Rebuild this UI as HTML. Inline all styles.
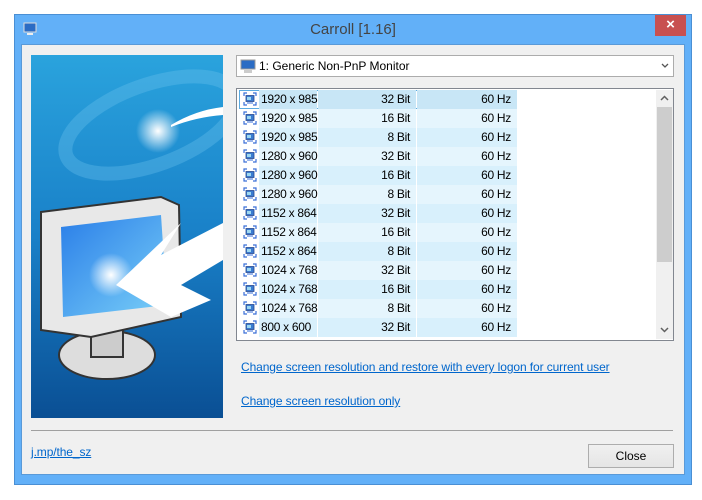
<!DOCTYPE html>
<html><head><meta charset="utf-8"><style>
*{margin:0;padding:0;box-sizing:border-box}
body{width:702px;height:500px;background:#fff;position:relative;overflow:hidden;font-family:"Liberation Sans",Arial,sans-serif;font-size:12px;color:#000}
.win{position:absolute;left:14px;top:14px;width:678px;height:471px;background:#62b0f8;border:1px solid #4a8fd4}
.title{position:absolute;left:0;right:0;top:6px;text-align:center;font-size:15px;color:#444}
.x{position:absolute;left:640px;top:0;width:31px;height:21px;background:#c85050;color:#fff;text-align:center;font-size:15px;line-height:20px;font-weight:bold}
.client{position:absolute;left:6px;top:29px;width:664px;height:431px;background:#f0f0f0;border:1px solid #5a9ad8}
.a{position:absolute}
.combo{left:236px;top:55px;width:438px;height:22px;background:#fff;border:1px solid #acacac}
.list{left:236px;top:88px;width:438px;height:253px;background:#fff;border:1px solid #828790}
.row{position:absolute;left:2px;height:19px;width:278px;font-size:12px;white-space:nowrap;letter-spacing:-0.3px}
.row span{position:absolute;top:0;height:19px;line-height:19px;white-space:nowrap;overflow:visible}
.c1{left:20px;width:58px;padding-left:2px}
.c2{left:79px;width:98px;text-align:right;padding-right:6px}
.c3{left:178px;width:100px;text-align:right;padding-right:6px}
.ic{position:absolute;left:4px;top:2px;width:14px;height:14px}
a{color:#0066cc;text-decoration:underline;letter-spacing:-0.1px}
.btn{left:588px;top:444px;width:86px;height:24px;border:1px solid #adadad;background:linear-gradient(#f0f0f0,#e5e5e5);text-align:center;line-height:22px;font-size:12px}
</style></head><body>
<div class="win">
<svg style="position:absolute;left:8px;top:7px" width="14" height="14" viewBox="0 0 14 14"><rect x="1" y="1" width="12" height="9" fill="#2b6cc4" stroke="#ddd"/><rect x="4" y="11" width="6" height="2" fill="#eee"/></svg>
<div class="title">Carroll [1.16]</div>
<div class="x">×</div>
<div class="client"></div>
</div>
<svg class="a" style="left:31px;top:55px" width="192" height="363" viewBox="0 0 192 363">
<defs><linearGradient id="bg" x1="0" y1="0" x2="0" y2="1"><stop offset="0" stop-color="#2aa3dd"/><stop offset="0.5" stop-color="#1980c8"/><stop offset="1" stop-color="#0a4f94"/></linearGradient>
<radialGradient id="gl" cx="0.5" cy="0.5" r="0.5"><stop offset="0" stop-color="#fff"/><stop offset="1" stop-color="#fff" stop-opacity="0"/></radialGradient>
<linearGradient id="scr" x1="0" y1="0" x2="1" y2="1"><stop offset="0" stop-color="#2a7ee8"/><stop offset="1" stop-color="#7ad0f8"/></linearGradient></defs>
<rect width="192" height="363" fill="url(#bg)"/>
<ellipse cx="120" cy="70" rx="90" ry="40" fill="none" stroke="#6cc4ef" stroke-opacity="0.35" stroke-width="14" transform="rotate(-20 120 70)"/>
<circle cx="127" cy="76" r="22" fill="url(#gl)"/>
<path d="M140 70 Q165 55 192 52 L192 60 Q165 62 140 72Z" fill="#fff"/>
<ellipse cx="76" cy="300" rx="48" ry="24" fill="#ddd" stroke="#333" stroke-width="2"/>
<rect x="60" y="270" width="32" height="32" fill="#ccc" stroke="#333" stroke-width="2"/>
<path d="M10 157 L130 142 L148 150 L150 262 L60 282 L10 275Z" fill="#e8e8e8" stroke="#333" stroke-width="2"/>
<path d="M30 172 L130 160 L136 250 L32 262Z" fill="url(#scr)"/>
<circle cx="80" cy="220" r="22" fill="url(#gl)"/>
<path d="M85 230 L150 168 L130 200 L192 168 L192 205 L150 230 L180 245 L140 262Z" fill="#fff"/>
</svg>
<div class="a combo">
<svg class="a" style="left:3px;top:3px" width="16" height="15" viewBox="0 0 16 15"><rect x="1" y="1" width="14" height="9" fill="#2b6cc4" stroke="#999"/><rect x="4" y="11" width="8" height="3" fill="#ccc"/></svg>
<span class="a" style="left:22px;top:3px">1: Generic Non-PnP Monitor</span>
<svg class="a" style="left:424px;top:7px" width="8" height="6" viewBox="0 0 8 6"><path d="M1 1 L4 4 L7 1" fill="none" stroke="#555" stroke-width="1.3"/></svg>
</div>
<div class="a list">
<div class="a" style="left:419px;top:1px;width:17px;height:249px;background:#f0f0f0"></div>
<div class="a" style="left:420px;top:18px;width:15px;height:155px;background:#cdcdcd"></div>
<svg class="a" style="left:423px;top:6px" width="9" height="6"><path d="M1 5 L4.5 1.5 L8 5" fill="none" stroke="#606060" stroke-width="1.5"/></svg>
<svg class="a" style="left:423px;top:238px" width="9" height="6"><path d="M1 1 L4.5 4.5 L8 1" fill="none" stroke="#606060" stroke-width="1.5"/></svg>
<div id="rows"></div>
</div>
<div class="a" style="left:241px;top:360px"><a>Change screen resolution and restore with every logon for current user</a></div>
<div class="a" style="left:241px;top:394px"><a>Change screen resolution only</a></div>
<div class="a" style="left:31px;top:430px;width:642px;height:1px;background:#a0a0a0"></div>
<div class="a" style="left:31px;top:445px"><a>j.mp/the_sz</a></div>
<div class="a btn">Close</div>
<script>
var d=[["1920 x 985","32"],["1920 x 985","16"],["1920 x 985","8"],["1280 x 960","32"],["1280 x 960","16"],["1280 x 960","8"],["1152 x 864","32"],["1152 x 864","16"],["1152 x 864","8"],["1024 x 768","32"],["1024 x 768","16"],["1024 x 768","8"],["800 x 600","32"]];
var h="";
var ic='<svg class="ic" viewBox="0 0 14 14"><path d="M1 4V1H4M10 1H13V4M13 10V13H10M4 13H1V10" fill="none" stroke="#3a6fd8" stroke-width="1.2"/><rect x="3" y="3.5" width="8" height="6" fill="#3a7bd0" stroke="#2a4a90" stroke-width="0.8"/><rect x="4" y="5" width="4" height="3" fill="#9fd8f0"/><rect x="4" y="10.5" width="6" height="1" fill="#3a6fd8"/></svg>';
for(var i=0;i<d.length;i++){
 var bg=i%2?"#e5f5fd":"#d8f0fc";
 var sel=i==0?"outline:1px solid #5aaae0;outline-offset:-1px;":"";
 var b=i==0?"#c8e6f6":bg;
 h+='<div class="row" style="top:'+(1+i*19)+'px;'+sel+'">'+ic+'<span class="c1" style="background:'+b+'">'+d[i][0]+'</span><span class="c2" style="background:'+b+'">'+d[i][1]+' Bit</span><span class="c3" style="background:'+b+'">60 Hz</span></div>';
}
document.getElementById("rows").innerHTML=h;
</script>
</body></html>
